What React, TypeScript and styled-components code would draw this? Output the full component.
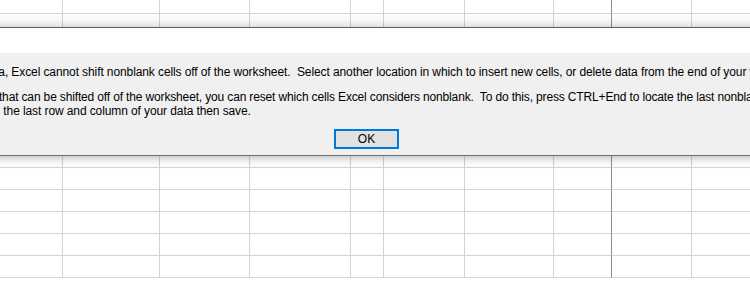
import React from "react";
import styled, { createGlobalStyle } from "styled-components";

const GlobalStyle = createGlobalStyle`
  html, body {
    margin: 0;
    padding: 0;
    background: #ffffff;
    overflow: hidden;
  }
  * { box-sizing: border-box; }
`;

const COLS = [63, 97, 90, 101, 33, 81, 89, 58, 80, 120];
const FROZEN_COL = 7;
const ROWS = 13;

const Page = styled.div`
  position: relative;
  width: 750px;
  height: 285px;
  overflow: hidden;
  background: #ffffff;
`;

const Sheet = styled.div<{ $cols: string }>`
  display: grid;
  grid-template-columns: ${(p) => p.$cols};
  grid-template-rows: 14px;
  grid-auto-rows: 22px;
`;

const Cell = styled.div<{ $frozen: boolean }>`
  border-right: 1px solid ${(p) => (p.$frozen ? "#8e8e8e" : "#d4d4d4")};
  border-bottom: 1px solid #d4d4d4;
  background: #ffffff;
`;

const Dialog = styled.div`
  position: absolute;
  top: 27px;
  left: -172px;
  width: 1077px;
  border-top: 1px solid #5f5f5f;
  border-bottom: 1px solid #6e6e6e;
  border-left: 1px solid #5f5f5f;
  border-right: 1px solid #5f5f5f;
  box-shadow: 0 0 13px rgba(0, 0, 0, 0.22), 0 2px 6px rgba(0, 0, 0, 0.12);
  display: flex;
  flex-direction: column;
  font-family: "Liberation Sans", Arial, sans-serif;
  font-size: 12px;
  color: #000000;
`;

const TitleBar = styled.div`
  height: 25px;
  background: #ffffff;
  display: flex;
  align-items: center;
  justify-content: space-between;
  padding-left: 8px;
`;

const Title = styled.span`
  font-size: 12px;
  color: #000000;
`;

const CloseBox = styled.span`
  width: 45px;
  height: 25px;
  display: flex;
  align-items: center;
  justify-content: center;
  font-size: 14px;
`;

const Body = styled.div`
  background: #f0f0f0;
  height: 102px;
  display: flex;
  flex-direction: column;
  padding: 12px 0 6px 11px;
`;

const Paragraph = styled.div`
  margin-bottom: 11px;
`;

const Line = styled.div<{ $indent: number; $tracking: number }>`
  height: 14px;
  line-height: 14px;
  white-space: pre;
  letter-spacing: ${(p) => p.$tracking}px;
  text-indent: ${(p) => p.$indent}px;
  color: #000000;
`;

const ButtonRow = styled.div`
  display: flex;
  justify-content: center;
  margin-left: -11px;
`;

const OkButton = styled.button`
  width: 65px;
  height: 20px;
  padding: 0;
  margin: 0;
  background: #e1e1e1;
  border: 2px solid #0078d7;
  font-family: "Liberation Sans", Arial, sans-serif;
  font-size: 12px;
  color: #000000;
  line-height: 16px;
`;

type TextLine = { text: string; indent: number; tracking: number };

const paragraphs: TextLine[][] = [
  [
    {
      text: "To prevent possible loss of data, Excel cannot shift nonblank cells off of the worksheet.  Select another location in which to insert new cells, or delete data from the end of your worksheet.",
      indent: 0,
      tracking: -0.1,
    },
  ],
  [
    {
      text: "If you don't have data in cells that can be shifted off of the worksheet, you can reset which cells Excel considers nonblank.  To do this, press CTRL+End to locate the last nonblank cell on the worksheet.  Then delete that",
      indent: 6,
      tracking: -0.15,
    },
    {
      text: "cell and all cells between it and the last row and column of your data then save.",
      indent: -2,
      tracking: -0.1,
    },
  ],
];

export default function App() {
  const cells = Array.from({ length: ROWS * COLS.length }, (_, i) => i);
  return (
    <>
      <GlobalStyle />
      <Page>
        <Sheet $cols={COLS.map((c) => `${c}px`).join(" ")}>
          {cells.map((i) => (
            <Cell key={i} $frozen={i % COLS.length === FROZEN_COL} />
          ))}
        </Sheet>
        <Dialog role="dialog">
          <TitleBar>
            <Title>Microsoft Excel</Title>
            <CloseBox>✕</CloseBox>
          </TitleBar>
          <Body>
            {paragraphs.map((p, pi) => (
              <Paragraph key={pi}>
                {p.map((l, li) => (
                  <Line key={li} $indent={l.indent} $tracking={l.tracking}>
                    {l.text}
                  </Line>
                ))}
              </Paragraph>
            ))}
            <ButtonRow>
              <OkButton>OK</OkButton>
            </ButtonRow>
          </Body>
        </Dialog>
      </Page>
    </>
  );
}
